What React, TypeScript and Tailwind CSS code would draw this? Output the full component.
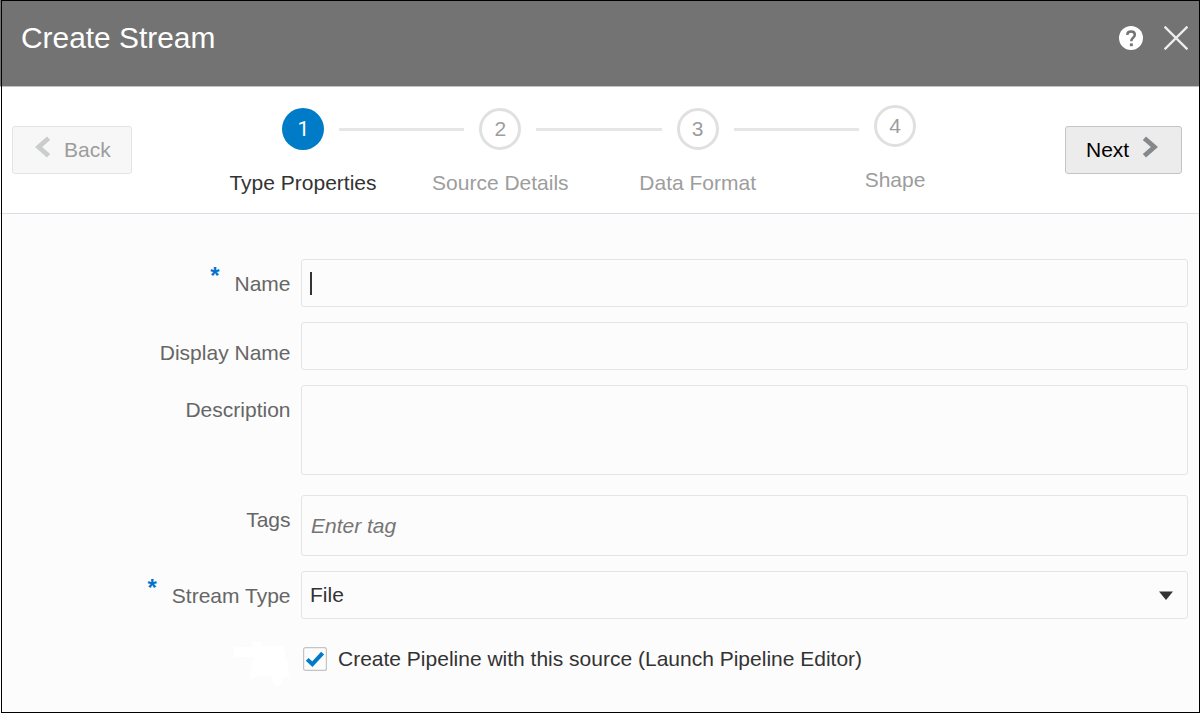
import type { ReactNode } from "react";

const steps = [
  { n: "1", label: "Type Properties" },
  { n: "2", label: "Source Details" },
  { n: "3", label: "Data Format" },
  { n: "4", label: "Shape" },
];

function Row({ label, required, className, labelClass, children }: {
  label: string;
  required?: boolean;
  className: string;
  labelClass: string;
  children?: ReactNode;
}) {
  return (
    <div className={`flex ${className}`}>
      <div className={`flex w-[290.5px] shrink-0 justify-end leading-6 text-[#666] ${labelClass}`}>
        {required && <span className="-mt-[8px] mr-[15px] text-[24px] font-bold text-[#0572ce]">*</span>}
        <label>{label}</label>
      </div>
      <div className="ml-[10.5px] mr-3 flex-1 rounded-[3px] border border-[#e4e4e4] bg-[#fcfcfc]">{children}</div>
    </div>
  );
}

export default function App() {
  return (
    <div className="relative flex h-[713px] w-[1200px] flex-col overflow-hidden bg-[#fcfcfc] font-['Liberation_Sans',Arial,sans-serif] text-[21px] text-[#333]">
      <header className="flex h-[87px] shrink-0 justify-between border-b border-[#c4c4c4] bg-[#737373] pl-[21px] pr-3">
        <h1 className="pt-5 text-[29.9px] leading-9 text-white">Create Stream</h1>
        <div className="flex gap-[21px] pt-[26px]">
          <svg width="24" height="24" viewBox="0 0 24 24">
            <circle cx="12" cy="12" r="12" fill="#fff" />
            <path d="M8.2 8.9C8.4 6.6 9.8 5.6 12 5.6s3.8 1.2 3.8 3.2c0 2.9-3.5 2.9-3.5 6.4" fill="none" stroke="#737373" strokeWidth="2.5" />
            <rect x="10.9" y="17.4" width="2.9" height="2.8" fill="#737373" />
          </svg>
          <svg width="24" height="24" viewBox="0 0 24 24" stroke="#ededf0" strokeWidth="2.3">
            <path d="M.6.6 23.4 23.4M23.4.6.6 23.4" />
          </svg>
        </div>
      </header>

      <nav className="flex h-[127px] shrink-0 border-b border-[#d8dfe6] bg-white pl-3">
        <button className="mt-[39px] flex h-12 w-[120px] rounded-[3px] border border-[#e3e3e3] bg-[#f7f7f7] pl-[22px] text-[#9d9d9d]">
          <svg className="mt-[9px]" width="16" height="22" viewBox="0 0 16 22" fill="none" stroke="#cacccd" strokeWidth="4.8">
            <path d="M13.6 2.2 3.6 11l10 8.8" />
          </svg>
          <span className="ml-[13px] mt-[11px] leading-6">Back</span>
        </button>

        <div className="ml-[72.3px] w-[789.4px]">
          <div className="flex items-center gap-[15px] px-[77.7px] pt-[21px]">
            {steps.map((s, i) => (
              <div key={s.n} className="contents">
                {i > 0 && <div className="h-[3px] flex-1 bg-[#e6e6e6]" />}
                <div
                  className={
                    i === 0
                      ? "flex size-[42px] shrink-0 items-center justify-center rounded-full bg-[#007bc8] pl-px pt-[2px] font-[Roboto,sans-serif] text-white"
                      : `flex size-[42px] shrink-0 items-center justify-center rounded-full border-[3px] border-[#dfe1e1] text-[#9d9d9d] ${i === 3 ? "-mt-[6px]" : ""}`
                  }
                >
                  {s.n}
                </div>
              </div>
            ))}
          </div>
          <div className="mt-[21px] grid grid-cols-4 text-center leading-6">
            {steps.map((s, i) => (
              <div key={s.n} className={i === 0 ? "text-[#333]" : i === 3 ? "-mt-[3px] text-[#9d9d9d]" : "text-[#9d9d9d]"}>
                {s.label}
              </div>
            ))}
          </div>
        </div>

        <button className="ml-auto mr-[18px] mt-[39px] flex h-12 w-[117px] rounded-[3px] border border-[#c4c4c4] bg-[#ececec] pl-5 text-black">
          <span className="mt-[11px] w-[43px] leading-6">Next</span>
          <svg className="ml-[13px] mt-[9px]" width="16" height="22" viewBox="0 0 16 22" fill="none" stroke="#85898c" strokeWidth="4.8">
            <path d="M2.4 2.2 12.4 11l-10 8.8" />
          </svg>
        </button>
      </nav>

      <main className="flex flex-col pt-[45px]">
        <Row label="Name" required className="h-12" labelClass="pt-[13px]">
          <div className="ml-2 mt-3 h-[23px] w-[2px] bg-[#333]" />
        </Row>
        <Row label="Display Name" className="mt-[15px] h-12" labelClass="pt-[19px]" />
        <Row label="Description" className="mt-[15px] h-[90px]" labelClass="pt-[13px]" />
        <Row label="Tags" className="mt-5 h-[61px]" labelClass="pt-[13px]">
          <div className="pl-[9px] pt-[18px] italic leading-6 text-[#757575]">Enter tag</div>
        </Row>
        <Row label="Stream Type" required className="mt-[15px] h-12" labelClass="pt-[13px]">
          <div className="flex justify-between pl-2 pr-[14px]">
            <span className="pt-[11px] leading-6">File</span>
            <svg className="mt-[19px]" width="14" height="9" viewBox="0 0 14 9">
              <path d="M0 .4h14L7 9z" fill="#333" />
            </svg>
          </div>
        </Row>
        <div className="mt-5 flex pl-[234px]">
          <svg width="56" height="47" viewBox="0 0 56 47" fill="#fff">
            <path d="M0 8h18V3h9l1 4h21l2 8 3 10 1 12-7 2-1 7h-7l-3-8-11-2-10 5 1-14 3-9H0z" />
          </svg>
          <label className="ml-[13px] mt-2 flex leading-6">
            <svg width="24" height="24" viewBox="0 0 24 24">
              <rect x=".6" y=".6" width="22.8" height="22.8" rx="2" fill="#fcfcfc" stroke="#c4c4c4" strokeWidth="1.2" />
              <path d="M4.2 12.4 9.4 17.2 19.6 6.2" fill="none" stroke="#007bc8" strokeWidth="4" />
            </svg>
            <span className="ml-[11px]">Create Pipeline with this source (Launch Pipeline Editor)</span>
          </label>
        </div>
      </main>
      <div className="pointer-events-none absolute inset-y-0 left-px right-0 border border-black" />
    </div>
  );
}
